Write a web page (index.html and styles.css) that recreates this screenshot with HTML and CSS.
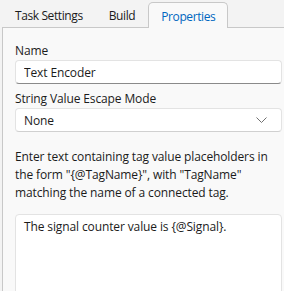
FILE: index.html
```html
<!DOCTYPE html>
<html lang="en">
<head>
  <meta charset="UTF-8" />
  <title>Properties</title>
  <link rel="stylesheet" href="styles.css">
</head>
<body>
  <div class="tabs">
    <div class="tab">Task Settings</div>
    <div class="tab">Build</div>
    <div class="tab active">Properties</div>
  </div>

  <div class="panel">
    <label for="name">Name</label>
    <input type="text" id="name" class="field" value="Text Encoder">

    <label for="escape">String Value Escape Mode</label>
    <div class="select" id="escape">
      <span>None</span>
      <svg class="chevron" width="11" height="6" viewBox="0 0 11 6">
        <path d="M0.5 0.5 L5.5 5.5 L10.5 0.5" fill="none" stroke="#707070" stroke-width="1"/>
      </svg>
    </div>

    <p class="hint">Enter text containing tag value placeholders in the form "{@TagName}", with "TagName" matching the name of a connected tag.</p>

    <div class="text-box">The signal counter value is {@Signal}.</div>
  </div>
</body>
</html>
```

FILE: styles.css
```css
body {
  margin: 0;
  background-color: #f3f3f3;
  font-family: 'Open Sans', sans-serif;
  font-size: 12px;
  letter-spacing: -0.12px;
  color: #1b1b1b;
  overflow: hidden;
}

.tabs {
  display: flex;
  padding-left: 2px;
  height: 27px;
  align-items: flex-end;
}

.tab {
  padding: 0 13px;
  height: 24px;
  line-height: 26px;
  letter-spacing: -0.4px;
}

.tab.active {
  color: #0067c0;
  background-color: #f9f9f9;
  border: 1px solid #c8c8c8;
  border-bottom: none;
  border-radius: 5px 5px 0 0;
  margin-bottom: -1px;
  position: relative;
  z-index: 1;
  height: 25px;
  line-height: 27px;
  padding: 0 12px;
}

.panel {
  margin-left: 2px;
  width: 267px;
  height: 300px;
  border: 1px solid #c8c8c8;
  background-color: #f9f9f9;
  padding: 14px 13px 0 12px;
}

label {
  display: block;
  line-height: 18px;
}

.field, .select {
  box-sizing: border-box;
  width: 100%;
  height: 24px;
  margin: 0 0 6px 0;
  padding: 0 8px;
  font-family: inherit;
  font-size: 12px;
  letter-spacing: -0.12px;
  color: #1b1b1b;
  background-color: #ffffff;
  border: 1px solid #e3e3e3;
  border-bottom-color: #8a8a8a;
  border-radius: 4px;
}

.select {
  display: flex;
  align-items: center;
  justify-content: space-between;
  border-bottom-color: #d0d0d0;
}

.chevron {
  margin-right: 6px;
}

.hint {
  margin: 16px 0 0 0;
  line-height: 18px;
}

.text-box {
  margin-top: 12px;
  height: 100px;
  background-color: #ffffff;
  border: 1px solid #e3e3e3;
  border-radius: 4px;
  padding: 3px 8px;
  line-height: 18px;
}
```
